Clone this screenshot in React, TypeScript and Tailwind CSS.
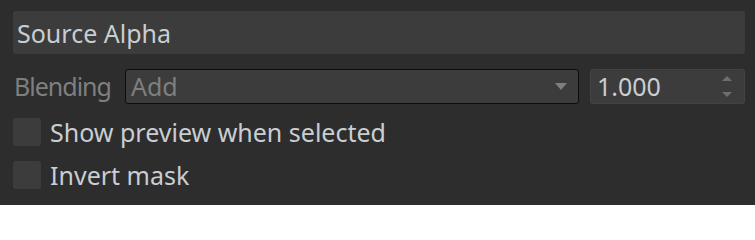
import React from "react";

const font = { fontFamily: '"Noto Sans", "Open Sans", sans-serif' };

export default function App() {
  return (
    <div
      className="w-[755px] h-[205px] bg-[#2d2d2d] pl-[13px] pr-[10px] pt-[11px] flex flex-col text-[25px] text-[#c9ced3]"
      style={font}
    >
      <div className="h-[43px] rounded-[3px] bg-[#3c3c3c] flex items-center pl-[4px] pt-[1px] leading-none">
        Source Alpha
      </div>
      <div className="mt-[15px] h-[35px] flex items-center">
        <span className="ml-[1px] w-[111px] text-[#7f7f7f] leading-none whitespace-nowrap tracking-[-1px]">Blending</span>
        <div className="w-[454px] h-[35px] rounded-[3px] border border-[#0c0c0c] bg-[#3c3c3c] flex items-center pl-[5px] pr-[11px] text-[#7f7f7f] leading-none">
          <span className="flex-1">Add</span>
          <svg width="12" height="7" viewBox="0 0 12 7">
            <path d="M0 0 H12 L6 7 Z" fill="#7f7f7f" />
          </svg>
        </div>
        <div className="ml-[11px] w-[155px] h-[35px] rounded-[3px] border border-[#434343] bg-[#3c3c3c] flex items-center pl-[6px] pr-[12px] leading-none">
          <span className="flex-1">1.000</span>
          <div className="flex flex-col gap-[11px]">
            <svg width="10" height="5" viewBox="0 0 10 5">
              <path d="M5 0 L10 5 H0 Z" fill="#6e6e6e" />
            </svg>
            <svg width="10" height="5" viewBox="0 0 10 5">
              <path d="M0 0 H10 L5 5 Z" fill="#6e6e6e" />
            </svg>
          </div>
        </div>
      </div>
      <div className="mt-[14px] flex items-center gap-[9px] h-[28px] leading-none">
        <div className="w-[28px] h-[28px] rounded-[3px] bg-[#3c3c3c]" />
        <span>Show preview when selected</span>
      </div>
      <div className="mt-[15px] flex items-center gap-[9px] h-[28px] leading-none">
        <div className="w-[28px] h-[28px] rounded-[3px] bg-[#3c3c3c]" />
        <span>Invert mask</span>
      </div>
    </div>
  );
}
